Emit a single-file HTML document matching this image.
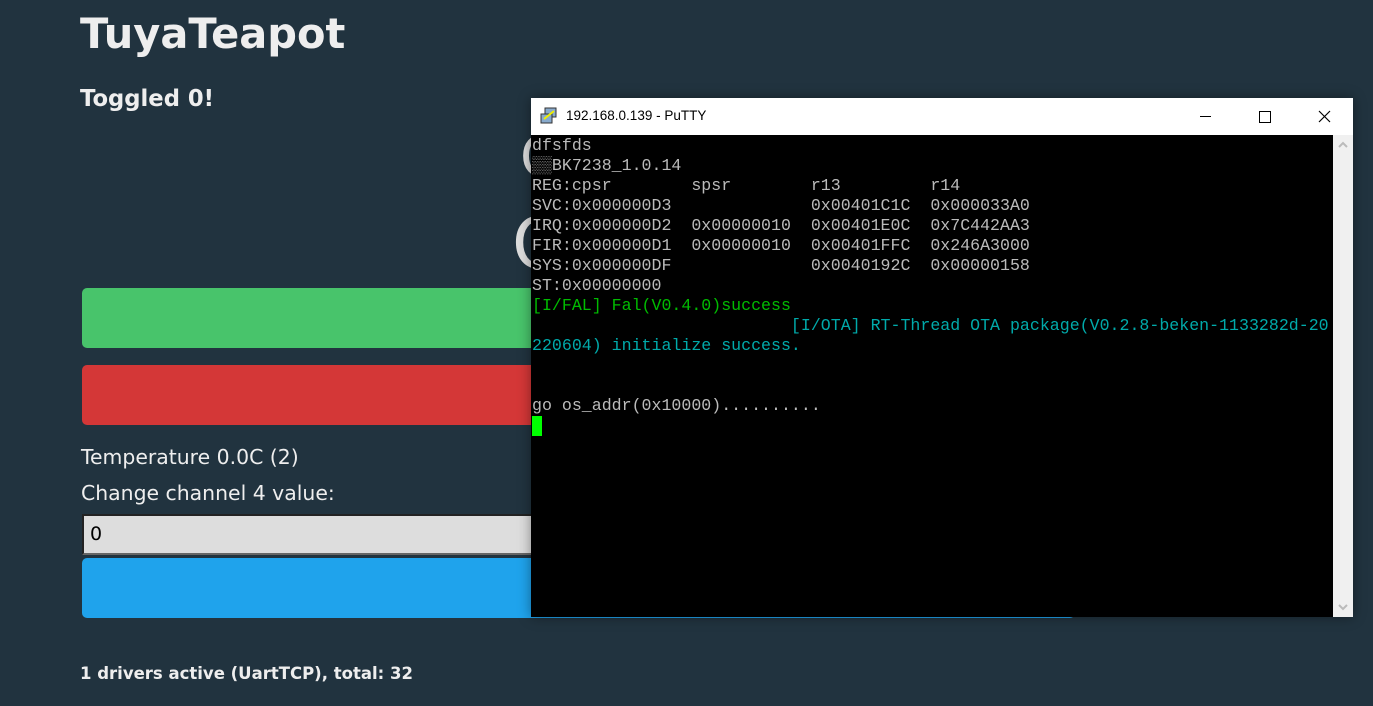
<!DOCTYPE html>
<html><head><style>
body{margin:0;width:1373px;height:706px;background:#21333f;overflow:hidden;position:relative;font-family:"DejaVu Sans","Liberation Sans",sans-serif;color:#eee}
.a{position:absolute}
.mono{font-family:"Liberation Mono","DejaVu Sans Mono",monospace;font-size:16.6px;line-height:20px;white-space:pre;color:#bbb}
</style></head><body>
<div class="a" style="left:80px;top:10px;font-size:41.5px;font-weight:bold;color:#eee;line-height:48px">TuyaTeapot</div>
<div class="a" style="left:80px;top:86px;font-size:22.7px;font-weight:bold;line-height:26px">Toggled 0!</div>
<div class="a" style="left:520px;top:128px;font-size:56px;color:#ddd;line-height:60px">O</div>
<div class="a" style="left:512px;top:206px;font-size:70px;color:#ddd;line-height:76px">O</div>
<div class="a" style="left:82px;top:288px;width:993px;height:60px;background:#48c46b;border-radius:5px"></div>
<div class="a" style="left:82px;top:365px;width:993px;height:60px;background:#d43737;border-radius:5px"></div>
<div class="a" style="left:81px;top:444px;font-size:20.4px;line-height:26px">Temperature 0.0C (2)</div>
<div class="a" style="left:81px;top:480px;font-size:20.4px;line-height:26px">Change channel 4 value:</div>
<div class="a" style="left:82px;top:514px;width:990px;height:37px;background:#ddd;border-top:2px solid #222;border-left:2px solid #222;border-bottom:2px solid #666;color:#000;font-size:19px;line-height:37px;padding-left:6px;box-sizing:content-box">0</div>
<div class="a" style="left:82px;top:558px;width:993px;height:60px;background:#1fa3ec;border-radius:5px"></div>
<div class="a" style="left:80px;top:664px;font-size:16.5px;font-weight:bold;line-height:20px">1 drivers active (UartTCP), total: 32</div>

<div class="a" style="left:531px;top:98px;width:822px;height:519px;background:#000;box-shadow:0 0 12px rgba(0,0,0,.4)">
 <div class="a" style="left:0;top:0;width:822px;height:37px;background:#fff;color:#000;font-family:'Liberation Sans',sans-serif;font-size:13.5px">
  <svg class="a" style="left:9px;top:9px" width="18" height="18" viewBox="0 0 18 18"><rect x="5" y="1" width="11" height="9" fill="#8ac" stroke="#333"/><rect x="1" y="7" width="11" height="9" fill="#8ac" stroke="#333"/><path d="M4 12 L14 4" stroke="#ee0" stroke-width="2"/></svg>
  <div class="a" style="left:35px;top:10px">192.168.0.139 - PuTTY</div>
  <div class="a" style="left:669px;top:18px;width:11px;height:1px;background:#000"></div>
  <div class="a" style="left:728px;top:13px;width:10px;height:10px;border:1px solid #000"></div>
  <svg class="a" style="left:787px;top:12px" width="13" height="13"><path d="M1 1L12 12M12 1L1 12" stroke="#000" stroke-width="1.2"/></svg>
 </div>
 <div class="a" style="left:802px;top:37px;width:20px;height:482px;background:#f0f0f0">
  <svg class="a" style="left:5px;top:6px" width="10" height="8"><path d="M1 6L5 2L9 6" stroke="#bbb" stroke-width="2" fill="none"/></svg>
  <svg class="a" style="left:5px;bottom:6px" width="10" height="8"><path d="M1 2L5 6L9 2" stroke="#bbb" stroke-width="2" fill="none"/></svg>
 </div>
 <div class="a mono" style="left:1px;top:38px">dfsfds
<span style="color:#888">▒▒</span>BK7238_1.0.14
REG:cpsr        spsr        r13         r14
SVC:0x000000D3              0x00401C1C  0x000033A0
IRQ:0x000000D2  0x00000010  0x00401E0C  0x7C442AA3
FIR:0x000000D1  0x00000010  0x00401FFC  0x246A3000
SYS:0x000000DF              0x0040192C  0x00000158
ST:0x00000000
<span style="color:#0b0">[I/FAL] Fal(V0.4.0)success</span>
<span style="color:#0aa">                          [I/OTA] RT-Thread OTA package(V0.2.8-beken-1133282d-20
220604) initialize success.</span>


go os_addr(0x10000)..........</div>
 <div class="a" style="left:1px;top:318px;width:10px;height:20px;background:#0f0"></div>
</div>
</body></html>
